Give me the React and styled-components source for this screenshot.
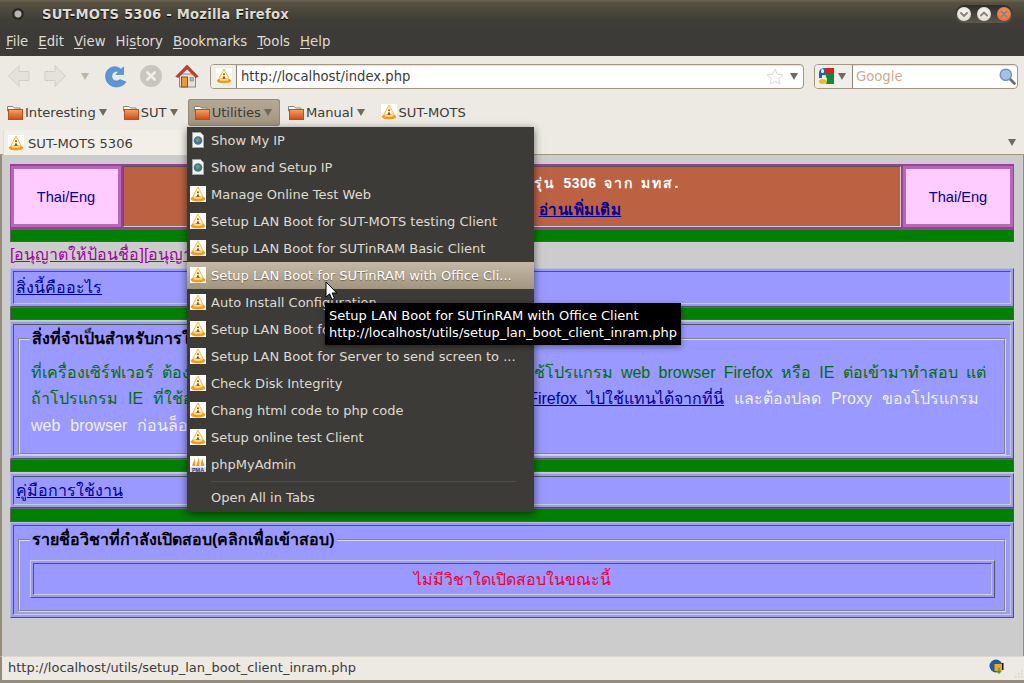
import React from 'react';
import styled, { createGlobalStyle } from 'styled-components';

const Global = createGlobalStyle`
  html, body { margin: 0; padding: 0; background: #3c3b37; }
  #root { width: 1024px; height: 683px; overflow: hidden; }
  * { box-sizing: border-box; }
`;

const Frame = styled.div`
  position: relative; width: 1024px; height: 683px; overflow: hidden;
  display: flex; flex-direction: column; background: #3c3b37;
  font-family: "DejaVu Sans", sans-serif; font-size: 13px;
`;
const TitleBar = styled.div`
  height: 28px; flex: none; display: flex; align-items: center; padding: 0 11px 0 12px;
  background: linear-gradient(#6a6353 0, #55503f 3px, #403e38 20px, #3c3b37 100%);
`;
const TitleDot = styled.span`
  width: 12px; height: 12px; border-radius: 50%; margin-right: 18px; flex: none;
  background: radial-gradient(circle at 50% 50%, #bbb7ae 0 3px, #2b2a27 4px 100%);
`;
const TitleText = styled.span`
  color: #dfdbd2; font-weight: bold; font-size: 13.2px; letter-spacing: 0.2px; flex: 1; text-shadow: 0 1px 1px #000;
`;
const WindowButtons = styled.div`
  display: flex; gap: 6px; align-items: center; padding: 2px; height: 18px; border-radius: 9px;
  background: linear-gradient(#2d2c28, #5c5950);
`;
const WinBtn = styled.span`
  width: 14px; height: 14px; border-radius: 50%; display: block;
  background: ${p => p.$close ? 'radial-gradient(circle at 50% 40%, #f59a6c, #e0622a)' : 'radial-gradient(circle at 50% 40%, #faf8f2, #d8d4c8)'};
  & svg { display: block; }
`;
const MenuBar = styled.div`
  height: 28px; flex: none; display: flex; gap: 10px; align-items: center; padding: 0 0 2px 6px;
  color: #dfdbd2; background: #3c3b37; font-size: 13.3px;
`;
const MenuLabel = styled.span`
  & u { text-decoration: underline; text-underline-offset: 2px; }
`;
const NavBar = styled.div`
  height: 41px; flex: none; display: flex; align-items: center; padding: 0 6px 1px 8px;
  background: #edeae3;
`;
const NavIcon = styled.span`
  flex: none; display: block; width: ${p => p.$w}px; height: 24px; margin-right: ${p => p.$mr}px;
  & svg { display: block; }
`;
const FieldBox = styled.div`
  height: 25px; display: flex; align-items: center; background: #fff;
  border: 1px solid #a39781; border-radius: 4px;
  box-shadow: inset 0 1px 1px #e3dfd6;
`;
const UrlBox = styled(FieldBox)`
  flex: none; width: 594px; margin-right: 10px; margin-left: 11px;
`;
const SearchBox = styled(FieldBox)`
  flex: 1;
`;
const UrlIconCell = styled.span`
  flex: none; width: 26px; height: 23px; display: flex; align-items: center; justify-content: center;
  background: #f1efe9; border-right: 1px solid #8c8272; border-radius: 3px 0 0 3px;
`;
const SearchEngine = styled.span`
  flex: none; width: 38px; height: 23px; display: flex; align-items: center; gap: 4px; padding-left: 3px;
  background: #f1efe9; border-right: 1px solid #8c8272; border-radius: 3px 0 0 3px;
`;
const UrlText = styled.span`
  flex: 1; padding-left: 4px; color: #3c3b37; font-size: 13.2px;
`;
const Placeholder = styled.span`
  flex: 1; padding-left: 3px; color: #c9ae8e; font-size: 13.2px;
`;
const Tri = styled.span`
  display: block; flex: none; width: 0; height: 0;
  border-left: 4px solid transparent; border-right: 4px solid transparent;
  border-top: 7px solid ${p => p.$c || '#706a5e'};
  margin: ${p => p.$m || 0};
`;
const BookmarkBar = styled.div`
  height: 31px; flex: none; display: flex; align-items: center; gap: 2px; padding: 0 0 1px 1px;
  background: #edeae3;
`;
const Bookmark = styled.div`
  height: 27px; display: flex; align-items: center; gap: 2px; padding: 0 8px 0 6px;
  color: #3c3b37; border-radius: 3px; font-size: 13.1px;
  ${p => p.$active && `
    background: linear-gradient(#b5a997, #a3957f);
    box-shadow: inset 0 0 0 1px #978a75;
  `}
`;
const TabBar = styled.div`
  height: 27px; flex: none; display: flex; align-items: flex-end; padding: 0 8px 0 3px;
  background: #edeae3; border-bottom: 1px solid #a39781; justify-content: space-between;
`;
const Tab = styled.div`
  width: 300px; height: 25px; display: flex; align-items: center; gap: 4px; padding: 1px 0 0 4px;
  background: #f2efe9; color: #3c3b37; border-radius: 3px 3px 0 0; border-left: 1px solid #e0dcd2;
  margin-bottom: -1px; font-size: 13.1px;
`;
const Content = styled.div`
  flex: 1; min-height: 0; background: #cccccc; border-left: 2px solid #958c7b; border-right: 1px solid #958c7b;
  padding: 9px 9px 0 8px; font-family: "Liberation Sans", "Noto Sans", sans-serif; font-size: 16px;
`;
const Banner = styled.div`
  height: 65px; display: flex; gap: 2px; padding: 2px 1px 2px 1px; background: #993f99;
`;
const LangCell = styled.div`
  flex: none; width: 110px; display: flex; align-items: center; justify-content: center;
  background: #ffccff; border: 3px solid #b866b8; color: #000099; font-size: 14.6px; padding-top: 1px;
`;
const BannerMid = styled.div`
  flex: 1; background: #bd6143; border: 1px solid; border-color: #555 #ccc #ccc #555;
  display: flex; flex-direction: column; align-items: center; gap: 7px; padding-top: 6px; color: #fff; font-weight: bold; font-size: 14px;
`;
const BannerLine = styled.div`
  word-spacing: 3px; letter-spacing: 0.5px; white-space: nowrap; line-height: 20px;
`;
const BannerThai = styled.span`
  letter-spacing: 2px;
`;
const BannerLink = styled.a`
  color: #000099; text-decoration: underline; font-size: 15.2px;
`;
const Rule = styled.div`
  height: ${p => p.$h || 13}px; background: #008000;
  border: 1px solid; border-color: #666 #555 #555 #666;
`;
const PermRow = styled.div`
  height: 26px; line-height: 24px; white-space: nowrap; overflow: hidden; padding-top: 1px;
  & a { color: #a000a0; text-decoration: underline; }
`;
const Panel = styled.div`
  height: ${p => p.$h}px; margin-top: ${p => p.$mt || 0}px; background: #9999ff; padding: 2px;
  border: 1px solid; border-color: #bbbbdd #555 #555 #bbbbdd;
`;
const PanelCell = styled.div`
  height: 100%; border: 1px solid; border-color: #555 #cccccc #cccccc #555;
  padding: 0 2px;
  display: flex; align-items: center;
  & a { color: #000099; text-decoration: underline; }
`;
const GroupCell = styled.div`
  height: 100%; border: 1px solid; border-color: #555 #cccccc #cccccc #555;
  padding: 4px 4px 0 4px;
`;
const Group = styled.fieldset`
  margin: 0; height: ${p => p.$h}px; padding: 0 9px 0 10px; min-width: 0;
  border: 2px groove #d8d8d8;
`;
const Legend = styled.legend`
  font-weight: bold; color: #000; padding: 0 2px; font-size: 16px; line-height: 19px;
`;
const Para = styled.div`
  padding: 11.5px 9px 0 1px;
`;
const ParaLine = styled.div`
  height: 26.5px; line-height: 26px; color: #006f00; overflow: hidden;
  padding-right: ${p => p.$pr || 0}px;
  text-align: justify; text-align-last: justify;
  & a { color: #000099; text-decoration: underline; }
  & em { font-style: normal; color: #f0f0ff; }
`;
const PlainLine = styled.div`
  height: 26.5px; line-height: 26px; color: #f0f0ff; white-space: nowrap; overflow: hidden; word-spacing: 5.5px;
`;
const InnerTable = styled.div`
  height: 38px; margin: 11px 0 0 0; padding: 2px; border: 1px solid; border-color: #ccc #555 #555 #ccc;
`;
const InnerCell = styled.div`
  height: 100%; border: 1px solid; border-color: #555 #ccc #ccc #555;
  display: flex; align-items: center; justify-content: center; color: #f00030;
`;
const StatusBar = styled.div`
  height: 24px; flex: none; display: flex; align-items: center; justify-content: space-between;
  padding: 0 19px 3px 6px; color: #3c3b37; background: #edeae3; border-top: 1px solid #dcd8ce;
  border-left: 2px solid #958c7b; font-size: 13px;
`;
const BottomEdge = styled.div`
  height: 3px; flex: none; background: #958c7b;
`;
const DropMenu = styled.div`
  position: absolute; left: 187px; top: 127px; width: 347px; height: 385px; background: #3c3b37;
  box-shadow: 0 2px 8px rgba(0,0,0,.55); color: #dfdbd2; z-index: 2; font-size: 13px;
`;
const DropItem = styled.div`
  height: 27px; display: flex; align-items: center; gap: 5px; padding: 0 0 1px 3px; white-space: nowrap;
  ${p => p.$hot && 'background: linear-gradient(#c5b8a5, #a29580); color: #fff; text-shadow: 0 1px 1px #6b6252;'}
`;
const NoIcon = styled.span`
  width: 16px; flex: none;
`;
const Sep = styled.div`
  height: 1px; margin: 3px 18px 0 24px; background: #4f4d47;
`;
const Footer = styled(DropItem)`
  margin-top: 2px;
`;
const Tip = styled.div`
  position: absolute; left: 325px; top: 303px; width: 356px; height: 42px; background: #000; color: #fff;
  padding: 4px; line-height: 17px; white-space: nowrap; z-index: 3; box-shadow: 0 2px 6px rgba(0,0,0,.4); font-size: 13px;
`;
const Pointer = styled.svg`
  position: absolute; left: 325px; top: 281px; z-index: 4;
`;
const IconBox = styled.svg`
  display: block; flex: none;
`;

const Lamp = () => (
  <IconBox width="16" height="16" viewBox="0 0 16 16">
    <rect width="16" height="16" fill="#fff" />
    <path d="M8 1 L13.5 11.5 H2.5 Z" fill="#fff6d6" stroke="#f6b93a" strokeWidth="1" strokeLinejoin="round" />
    <ellipse cx="8" cy="12.8" rx="7.4" ry="2.6" fill="#f59a1a" />
    <ellipse cx="8" cy="11.8" rx="4.6" ry="1.1" fill="#ffdc78" />
    <circle cx="8" cy="6.2" r=".9" fill="#5d4630" />
    <path d="M6.3 10.8 L8 7.4 L9.7 10.8 Z" fill="#6b543c" />
  </IconBox>
);
const Page = () => (
  <IconBox width="16" height="16" viewBox="0 0 16 16">
    <path d="M2.5 .5 H10.5 L13.5 3.5 V15.5 H2.5 Z" fill="#f4f4f2" stroke="#a5a5a0" />
    <circle cx="8" cy="8.5" r="4.3" fill="#3f74a8" />
    <path d="M5.5 7 L8 5.5 L10 7.5 L8.5 10 L6.5 10 Z" fill="#7aa04a" />
  </IconBox>
);
const Pma = () => (
  <IconBox width="16" height="16" viewBox="0 0 16 16">
    <rect width="16" height="16" fill="#fff" />
    <path d="M2 10 L5 2 L5.5 10 Z M6 10 L9 1 L9.5 10 Z M10.5 10 L12 2 L14.5 10 Z" fill="#f29a1a" />
    <rect y="11" width="16" height="5" fill="#d8dbe8" />
    <text x="8" y="15.6" textAnchor="middle" fontSize="5.5" fontWeight="bold" fill="#1a2f78" fontFamily="Liberation Sans">PMA</text>
  </IconBox>
);
const Folder = () => (
  <IconBox width="16" height="16" viewBox="0 0 16 16">
    <defs><linearGradient id="fg" x1="0" y1="0" x2="0" y2="1"><stop offset="0" stopColor="#f6a265" /><stop offset="1" stopColor="#d14b12" /></linearGradient></defs>
    <path d="M.5 2.5 H6 L7.5 4 H13 V7 H.5 Z" fill="#fbfaf6" stroke="#8a8373" />
    <rect x="1.5" y="5.5" width="14" height="10" fill="url(#fg)" stroke="#b4521b" />
  </IconBox>
);
const Back = ({ flip }) => (
  <svg width="22" height="24" viewBox="0 0 22 24">
    <path d={flip ? 'M1 7.5 H11 V1.5 L21.5 12 L11 22.5 V16.5 H1 Z' : 'M21 7.5 H11 V1.5 L.5 12 L11 22.5 V16.5 H21 Z'} fill="#e4e2db" stroke="#d0cdc4" strokeLinejoin="round" />
  </svg>
);
const Reload = () => (
  <svg width="22" height="24" viewBox="0 0 22 24">
    <path d="M18.5 3 V10.5 H11 L13.7 7.8 C10.5 6.3 6.8 8.5 6.8 12.2 C6.8 16.5 11.8 18.5 15 15.6 L21 18 C17 25 2 25.5 .6 13 C0 4 10 -.5 16 5.4 Z" fill="#5b97d8" stroke="#3c78bb" strokeWidth=".6" strokeLinejoin="round" />
  </svg>
);
const Stop = () => (
  <svg width="22" height="24" viewBox="0 0 22 24">
    <circle cx="11" cy="12" r="11" fill="#c9c6bf" />
    <path d="M7.3 8.3 L14.7 15.7 M14.7 8.3 L7.3 15.7" stroke="#f2f0ea" strokeWidth="2.6" strokeLinecap="round" />
  </svg>
);
const Home = () => (
  <svg width="24" height="24" viewBox="0 0 24 24">
    <rect x="4.5" y="10" width="16" height="13" fill="#e3e1dc" stroke="#8b8a86" />
    <rect x="6.5" y="13" width="6" height="10" fill="#eb9a2c" stroke="#7a5a2a" />
    <rect x="15" y="13.5" width="3.5" height="3.5" fill="#a7b2bb" stroke="#777" strokeWidth=".5" />
    <path d="M0.8 12.5 L12 1 L23.2 12.5 L20.8 13.5 L12 5 L3.2 13.5 Z" fill="#c93a33" stroke="#9c2a25" strokeWidth=".6" strokeLinejoin="round" />
  </svg>
);
const Star = () => (
  <svg width="18" height="17" viewBox="0 0 18 17" style={{ flex: 'none' }}>
    <path d="M9 1 L11.3 6.3 L17 6.8 L12.6 10.5 L14 16 L9 13.2 L4 16 L5.4 10.5 L1 6.8 L6.7 6.3 Z" fill="#fff" stroke="#dddad3" strokeWidth="1" strokeLinejoin="round" />
  </svg>
);
const GoogleG = () => (
  <IconBox width="16" height="16" viewBox="0 0 16 16">
    <rect x="7" y="0" width="9" height="6" fill="#e41e1e" />
    <path d="M1 4 Q2 0 7 0 V7 H4 L4 10 H1 Z" fill="#1a5fb4" />
    <rect x="3" y="1" width="3" height="4" rx="1.5" fill="#fff" />
    <path d="M7 6 H16 V16 H8 L9 11 Z" fill="#0b8c3a" />
    <ellipse cx="4.8" cy="13.5" rx="4" ry="2.5" fill="#f0be1c" />
  </IconBox>
);
const Magnifier = () => (
  <svg width="17" height="17" viewBox="0 0 17 17" style={{ flex: 'none', marginRight: 1 }}>
    <path d="M10.5 10.5 L15.5 15.5" stroke="#6a6a6a" strokeWidth="2.6" strokeLinecap="round" />
    <circle cx="6.8" cy="6.8" r="5.6" fill="#9fc4ea" stroke="#7591b5" strokeWidth="1.4" />
  </svg>
);
const Firebug = () => (
  <IconBox width="16" height="16" viewBox="0 0 16 16">
    <circle cx="7" cy="7" r="6.5" fill="#1d5a9f" />
    <rect x="5.5" y="5" width="8" height="7" fill="#f5a90f" />
    <path d="M10 9 v5 M8 12 l2 2 l2 -2" stroke="#38a238" strokeWidth="1.3" fill="none" />
    <rect x="13" y="4" width="1.5" height="7" fill="#111" />
  </IconBox>
);
const Grip = () => (
  <svg width="10" height="10" viewBox="0 0 10 10" style={{ position: 'absolute', right: 1, bottom: 4 }}>
    <g fill="#d6d2c8"><rect x="8" y="1" width="1.4" height="1.4" /><rect x="5" y="4" width="1.4" height="1.4" /><rect x="8" y="4" width="1.4" height="1.4" /><rect x="2" y="7" width="1.4" height="1.4" /><rect x="5" y="7" width="1.4" height="1.4" /><rect x="8" y="7" width="1.4" height="1.4" /></g>
  </svg>
);
const WinGlyph = ({ d }) => (
  <svg width="14" height="14" viewBox="0 0 14 14"><path d={d} fill="none" stroke="#8a8578" strokeWidth="2" strokeLinecap="round" strokeLinejoin="round" /></svg>
);

const bookmarks = [
  ['Interesting', true, false],
  ['SUT', true, false],
  ['Utilities', true, true],
  ['Manual', true, false],
  ['SUT-MOTS', false, false],
];
const items = [
  [Page, 'Show My IP'],
  [Page, 'Show and Setup IP'],
  [Lamp, 'Manage Online Test Web'],
  [Lamp, 'Setup LAN Boot for SUT-MOTS testing Client'],
  [Lamp, 'Setup LAN Boot for SUTinRAM Basic Client'],
  [Lamp, 'Setup LAN Boot for SUTinRAM with Office Cli...', true],
  [Lamp, 'Auto Install Configuration'],
  [Lamp, 'Setup LAN Boot for Client to send screen'],
  [Lamp, 'Setup LAN Boot for Server to send screen to ...'],
  [Lamp, 'Check Disk Integrity'],
  [Lamp, 'Chang html code to php code'],
  [Lamp, 'Setup online test Client'],
  [Pma, 'phpMyAdmin'],
];

export default function App() {
  return (
    <Frame>
      <Global />
      <TitleBar>
        <TitleDot />
        <TitleText>SUT-MOTS 5306 - Mozilla Firefox</TitleText>
        <WindowButtons>
          <WinBtn><WinGlyph d="M4 6 L7 9 L10 6" /></WinBtn>
          <WinBtn><WinGlyph d="M4 8.5 L7 5.5 L10 8.5" /></WinBtn>
          <WinBtn $close><WinGlyph d="M4.5 4.5 L9.5 9.5 M9.5 4.5 L4.5 9.5" /></WinBtn>
        </WindowButtons>
      </TitleBar>
      <MenuBar>
        <MenuLabel><u>F</u>ile</MenuLabel>
        <MenuLabel><u>E</u>dit</MenuLabel>
        <MenuLabel><u>V</u>iew</MenuLabel>
        <MenuLabel>Hi<u>s</u>tory</MenuLabel>
        <MenuLabel><u>B</u>ookmarks</MenuLabel>
        <MenuLabel><u>T</u>ools</MenuLabel>
        <MenuLabel><u>H</u>elp</MenuLabel>
      </MenuBar>
      <NavBar>
        <NavIcon $w={22} $mr={14}><Back /></NavIcon>
        <NavIcon $w={22} $mr={15}><Back flip /></NavIcon>
        <Tri $c="#bdb6a0" $m="0 16px 0 0" />
        <NavIcon $w={22} $mr={13}><Reload /></NavIcon>
        <NavIcon $w={22} $mr={13}><Stop /></NavIcon>
        <NavIcon $w={24} $mr={0}><Home /></NavIcon>
        <UrlBox>
          <UrlIconCell><Lamp /></UrlIconCell>
          <UrlText>http://localhost/index.php</UrlText>
          <Star />
          <Tri $m="0 5px 0 6px" />
        </UrlBox>
        <SearchBox>
          <SearchEngine><GoogleG /><Tri /></SearchEngine>
          <Placeholder>Google</Placeholder>
          <Magnifier />
        </SearchBox>
      </NavBar>
      <BookmarkBar>
        {bookmarks.map(([label, folder, active]) => (
          <Bookmark key={label} $active={active}>
            {folder ? <Folder /> : <Lamp />}
            {label}
            {folder && <Tri $m="0 0 0 1px" />}
          </Bookmark>
        ))}
      </BookmarkBar>
      <TabBar>
        <Tab><Lamp />SUT-MOTS 5306</Tab>
        <Tri $m="0 0 8px 0" />
      </TabBar>
      <Content>
        <Banner>
          <LangCell>Thai/Eng</LangCell>
          <BannerMid>
            <BannerLine>ยินดีต้อนรับเข้าสู่ระบบสอบนี้ <BannerThai>รุ่น</BannerThai> 5306 <BannerThai>จาก</BannerThai> <BannerThai>มทส.</BannerThai></BannerLine>
            <BannerLine>รายละเอียดของงาน <BannerLink href="#">อ่านเพิ่มเติม</BannerLink></BannerLine>
          </BannerMid>
          <LangCell>Thai/Eng</LangCell>
        </Banner>
        <Rule $h={13} />
        <PermRow><a href="#">[อนุญาตให้ป้อนชื่อ]</a><a href="#">[อนุญาตให้ป้อนรหัส]</a></PermRow>
        <Panel $h={39}><PanelCell><a href="#">สิ่งนี้คืออะไร</a></PanelCell></Panel>
        <Rule $h={13} />
        <Panel $h={138} $mt={1}>
          <GroupCell>
            <Group $h={126}>
              <Legend>สิ่งที่จำเป็นสำหรับการใช้งาน</Legend>
              <Para>
                <ParaLine>ที่เครื่องเซิร์ฟเวอร์ ต้องมีการเชื่อมต่อเครือข่ายได้ และเครื่องลูกข่ายต้องใช้โปรแกรม web browser Firefox หรือ IE ต่อเข้ามาทำสอบ แต่</ParaLine>
                <ParaLine $pr={7}>ถ้าโปรแกรม IE ที่ใช้อยู่ไม่สามารถใช้งานได้อย่างปกติ <a href="#">ให้ดาวน์โหลด Firefox ไปใช้แทนได้จากที่นี่</a> <em>และต้องปลด Proxy ของโปรแกรม</em></ParaLine>
                <PlainLine>web browser ก่อนล็อกอินเข้าสู่ระบบทุกครั้ง</PlainLine>
              </Para>
            </Group>
          </GroupCell>
        </Panel>
        <Rule $h={13} />
        <Panel $h={35} $mt={1}><PanelCell><a href="#">คู่มือการใช้งาน</a></PanelCell></Panel>
        <Rule $h={14} />
        <Panel $h={96}>
          <GroupCell>
            <Group $h={82}>
              <Legend>รายชื่อวิชาที่กำลังเปิดสอบ(คลิกเพื่อเข้าสอบ)</Legend>
              <InnerTable><InnerCell>ไม่มีวิชาใดเปิดสอบในขณะนี้</InnerCell></InnerTable>
            </Group>
          </GroupCell>
        </Panel>
      </Content>
      <StatusBar>
        http://localhost/utils/setup_lan_boot_client_inram.php
        <Firebug />
        <Grip />
      </StatusBar>
      <BottomEdge />
      <DropMenu>
        {items.map(([Icon, label, hot]) => (
          <DropItem key={label} $hot={hot}><Icon />{label}</DropItem>
        ))}
        <Sep />
        <Footer><NoIcon />Open All in Tabs</Footer>
      </DropMenu>
      <Tip>Setup LAN Boot for SUTinRAM with Office Client<br />http://localhost/utils/setup_lan_boot_client_inram.php</Tip>
      <Pointer width="13" height="20" viewBox="0 0 13 20">
        <path d="M1 1 V16 L4.6 12.8 L7 18.5 L9.5 17.4 L7.2 12 H11.8 Z" fill="#fff" stroke="#000" strokeWidth="1" strokeLinejoin="round" />
      </Pointer>
    </Frame>
  );
}
